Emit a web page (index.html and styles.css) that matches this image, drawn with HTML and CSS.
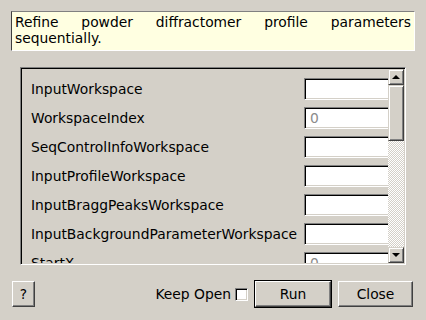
FILE: index.html
```html
<!DOCTYPE html>
<html lang="en">
<head>
    <meta charset="UTF-8">
    <title>RefinePowderDiffProfileSeq</title>
    <link rel="stylesheet" href="styles.css">
</head>
<body>
    <!-- Description -->
    <div class="description">
        Refine powder diffractomer profile parameters sequentially.
    </div>

    <!-- Property list -->
    <div class="frame">
        <div class="rows">
            <div class="row"><span class="label">InputWorkspace</span><div class="field"></div></div>
            <div class="row"><span class="label">WorkspaceIndex</span><div class="field placeholder">0</div></div>
            <div class="row"><span class="label">SeqControlInfoWorkspace</span><div class="field"></div></div>
            <div class="row"><span class="label">InputProfileWorkspace</span><div class="field"></div></div>
            <div class="row"><span class="label">InputBraggPeaksWorkspace</span><div class="field"></div></div>
            <div class="row"><span class="label">InputBackgroundParameterWorkspace</span><div class="field"></div></div>
            <div class="row"><span class="label">StartX</span><div class="field placeholder">0</div></div>
        </div>

        <!-- Scrollbar -->
        <div class="scrollbar">
            <div class="arrow-button"><span class="arrow-up"></span></div>
            <div class="track">
                <div class="thumb"></div>
            </div>
            <div class="arrow-button"><span class="arrow-down"></span></div>
        </div>
    </div>

    <!-- Buttons -->
    <div class="footer">
        <div class="button help-button">?</div>
        <div class="spacer"></div>
        <span class="keep-open">Keep Open</span>
        <div class="checkbox"></div>
        <div class="default-frame"><div class="button run-button">Run</div></div>
        <div class="button close-button">Close</div>
    </div>
</body>
</html>
```

FILE: styles.css
```css
/* Basic Styling */
body {
    margin: 0;
    padding-top: 11px;
    width: 426px;
    height: 320px;
    box-sizing: border-box;
    background-color: #d4d0c8;
    color: #000;
    font-family: "DejaVu Sans", sans-serif;
    font-size: 13.85px;
    overflow: hidden;
}

.description {
    box-sizing: border-box;
    margin: 0 11px;
    height: 40px;
    padding: 2px 3px 0 3px;
    background-color: #ffffe1;
    border: 1px solid;
    border-color: #808080 #ffffff #ffffff #404040;
    line-height: 16px;
    text-align: justify;
}

.frame {
    box-sizing: border-box;
    display: flex;
    margin: 16px 0 0 20px;
    width: 386px;
    height: 198px;
    border: 1px solid;
    border-color: #808080 #ffffff #ffffff #808080;
    padding: 1px;
    box-shadow: inset 1px 1px #000000, inset -1px -1px #d4d0c8;
}

.rows {
    flex: 1;
    overflow: hidden;
    padding: 9px 0 0 9px;
}

.row {
    display: grid;
    grid-template-columns: 273px 100px;
    align-items: center;
    height: 22px;
    margin-bottom: 7px;
    white-space: nowrap;
}

.field {
    box-sizing: border-box;
    height: 22px;
    background-color: #fff;
    border: 1px solid;
    border-color: #808080 #ffffff #ffffff #808080;
    box-shadow: inset 1px 1px #000000, inset -1px -1px #d4d0c8;
    padding: 2px 0 0 5px;
    line-height: 16px;
}

.placeholder {
    color: #8c8c8c;
}

/* Scrollbar */
.scrollbar {
    width: 16px;
    display: flex;
    flex-direction: column;
}

.arrow-button,
.thumb {
    box-sizing: border-box;
    background-color: #d4d0c8;
    border: 1px solid;
    border-color: #d4d0c8 #404040 #404040 #d4d0c8;
    box-shadow: inset 1px 1px #ffffff, inset -1px -1px #808080;
}

.arrow-button {
    height: 16px;
    display: flex;
    align-items: center;
    justify-content: center;
}

.arrow-up {
    width: 0;
    height: 0;
    border-left: 4px solid transparent;
    border-right: 4px solid transparent;
    border-bottom: 4px solid #000;
}

.arrow-down {
    width: 0;
    height: 0;
    border-left: 4px solid transparent;
    border-right: 4px solid transparent;
    border-top: 4px solid #000;
}

.track {
    flex: 1;
    background-color: #d4d0c8;
    background-image: conic-gradient(#ffffff 25%, #d4d0c8 0 50%, #ffffff 0 75%, #d4d0c8 0);
    background-size: 2px 2px;
}

.thumb {
    height: 56px;
}

/* Footer */
.footer {
    display: flex;
    align-items: center;
    margin-top: 15px;
    padding: 0 13px 0 12px;
    height: 28px;
}

.spacer {
    flex: 1;
}

.button {
    box-sizing: border-box;
    height: 26px;
    display: flex;
    align-items: center;
    justify-content: center;
    background-color: #d4d0c8;
    border: 1px solid;
    border-color: #ffffff #404040 #404040 #ffffff;
    box-shadow: inset -1px -1px #808080;
}

.help-button {
    width: 23px;
}

.keep-open {
    margin-right: 4px;
}

.checkbox {
    box-sizing: border-box;
    width: 13px;
    height: 13px;
    background-color: #fff;
    border: 1px solid;
    border-color: #808080 #ffffff #ffffff #808080;
    box-shadow: inset 1px 1px #000000, inset -1px -1px #d4d0c8;
    margin-right: 6px;
}

.default-frame {
    border: 1px solid #000;
    margin-right: 6px;
}

.run-button {
    width: 76px;
}

.close-button {
    width: 75px;
}
```
